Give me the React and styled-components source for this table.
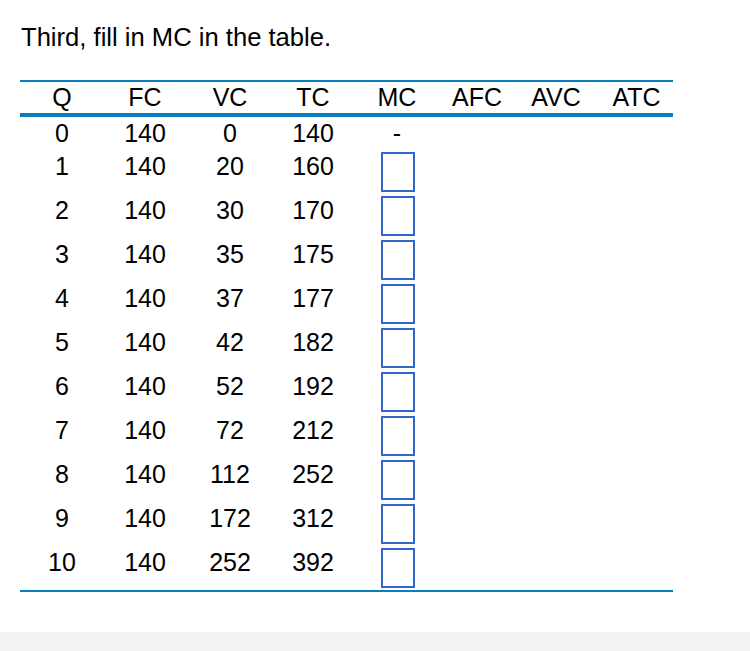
import React from "react";
import styled, { createGlobalStyle } from "styled-components";

const GlobalStyle = createGlobalStyle`
  html, body {
    margin: 0;
    padding: 0;
    background: #f2f2f2;
  }
  body {
    font-family: "Liberation Sans", Arial, Helvetica, sans-serif;
    color: #000;
  }
`;

const Page = styled.div`
  background: #fff;
  height: 632px;
  padding: 23px 0 0 21px;
  box-sizing: border-box;
`;

const Title = styled.div`
  font-size: 25.6px;
  line-height: 28.5px;
  margin-bottom: 28.5px;
`;

const Table = styled.div`
  width: 653px;
  margin-left: -1px;
  border-top: 2px solid #0a7fbf;
  border-bottom: 2px solid #0a7fbf;
  font-size: 25px;
`;

const COLS = "84px 82px 88px 78px 90px 70px 88px 73px";

const HeadRow = styled.div`
  display: grid;
  grid-template-columns: ${COLS};
  height: 31px;
  align-items: center;
  border-bottom: 4px solid #0a7fbf;
`;

const Row = styled.div`
  display: grid;
  grid-template-columns: ${COLS};
  padding: 2px 0;
  align-items: start;
`;

const Cell = styled.div`
  text-align: center;
  line-height: 29px;
  height: ${(p) => (p.$tall ? "40px" : "29px")};
`;

const AnswerBox = styled.div`
  width: 34px;
  height: 40px;
  box-sizing: border-box;
  border: 2px solid #3366cc;
  margin: 0 auto;
  transform: translateX(1px);
`;

const headers = ["Q", "FC", "VC", "TC", "MC", "AFC", "AVC", "ATC"];

const data = [
  [0, 140, 0, 140],
  [1, 140, 20, 160],
  [2, 140, 30, 170],
  [3, 140, 35, 175],
  [4, 140, 37, 177],
  [5, 140, 42, 182],
  [6, 140, 52, 192],
  [7, 140, 72, 212],
  [8, 140, 112, 252],
  [9, 140, 172, 312],
  [10, 140, 252, 392],
];

export default function App() {
  return (
    <>
      <GlobalStyle />
      <Page>
        <Title>Third, fill in MC in the table.</Title>
        <Table>
          <HeadRow>
            {headers.map((h) => (
              <Cell key={h}>{h}</Cell>
            ))}
          </HeadRow>
          {data.map((r, i) => (
            <Row key={i}>
              {r.map((v, j) => (
                <Cell key={j} $tall={i > 0}>{v}</Cell>
              ))}
              <Cell $tall={i > 0}>{i === 0 ? "-" : <AnswerBox />}</Cell>
              <Cell />
              <Cell />
              <Cell />
            </Row>
          ))}
        </Table>
      </Page>
    </>
  );
}
